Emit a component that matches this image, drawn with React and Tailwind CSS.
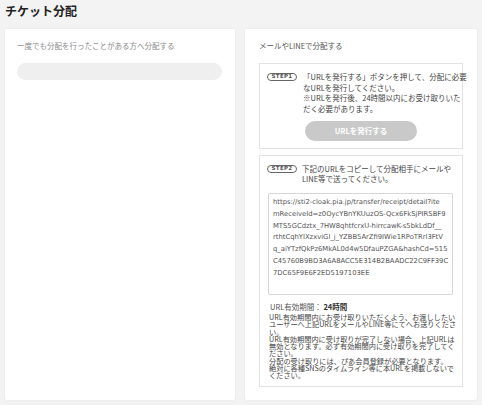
const jp = '[font-family:"Noto_Sans_CJK_JP","Noto_Sans",sans-serif]'

const urlLines = [
    'https://sti2-cloak.pia.jp/transfer/receipt/detail?ite',
    'mReceiveId=z0OycYBnYKUuzOS-Qcx6FkSjPIRSBF9',
    'MTS5GCdztx_7HW8qhtfcrxU-hirrcawK-s5bkLdDf__',
    'rthtCqhYIXzxviGl_j_YZBB5ArZfi9IWie1RPoTRrl3FtV',
    'q_aiYTzfQkPz6MkAL0d4w5DfauPZGA&hashCd=515',
    'C45760B9BD3A6A8ACC5E314B2BAADC22C9FF39C',
    '7DC65F9E6F2ED5197103EE',
]

const StepBadge = ({ n }) => (
    <span className="shrink-0 mt-[1px] flex items-center justify-center w-[30px] h-[8px] rounded-full border border-[#666] text-[5.5px] leading-none font-bold tracking-[0.3px] text-[#555] [font-family:'DejaVu_Sans',sans-serif]">
        STEP{n}
    </span>
)

export default function App() {
    return (
        <div className={`w-[482px] h-[405px] overflow-hidden bg-[#f3f3f3] px-[5px] ${jp}`}>
            <h1 className="h-[29px] pt-[3px] text-[12px] leading-[16px] font-bold text-[#222]">チケット分配</h1>
            <div className="flex gap-[10px]">
                {/* left card */}
                <div className="w-[230px] h-[371px] bg-white rounded-[2px] shadow-[0_0_2px_rgba(0,0,0,0.08)] px-[12px] pt-[12px]">
                    <p className="text-[7.5px] leading-[10px] text-[#8a8a8a]">一度でも分配を行ったことがある方へ分配する</p>
                    <div className="mt-[12px] h-[17px] w-[205px] rounded-full bg-[#efefef]"></div>
                </div>

                {/* right card */}
                <div className="w-[232px] h-[371px] bg-white rounded-[2px] shadow-[0_0_2px_rgba(0,0,0,0.08)] px-[14px] pt-[12px]">
                    <p className="text-[7.5px] leading-[10px] text-[#555]">メールやLINEで分配する</p>

                    <div className="mt-[12px] border border-[#e3e3e3] pt-[8px] pb-[7px]">
                        <div className="flex pl-[7px] gap-[6px]">
                            <StepBadge n={1} />
                            <p className="text-[7.5px] leading-[10.5px] text-[#444] whitespace-nowrap">
                                「URLを発行する」ボタンを押して、分配に必要
                                <br />
                                なURLを発行してください。
                                <br />
                                ※URLを発行後、24時間以内にお受け取りいた
                                <br />
                                だく必要があります。
                            </p>
                        </div>
                        <div className="mt-[7px] flex justify-center">
                            <button className="w-[112px] h-[20px] rounded-full bg-[#c9c9c9] text-white text-[7.5px] font-bold">
                                URLを発行する
                            </button>
                        </div>
                    </div>

                    <div className="mt-[6px] h-[232px] border border-[#e3e3e3] pt-[8px]">
                        <div className="flex pl-[7px] gap-[5px]">
                            <StepBadge n={2} />
                            <p className="text-[7.5px] leading-[10px] text-[#444] whitespace-nowrap">
                                下記のURLをコピーして分配相手にメールや
                                <br />
                                LINE等で送ってください。
                            </p>
                        </div>
                        <div className="mt-[9px] ml-[8px] w-[185px] h-[102px] border border-[#d6d6d6] rounded-[2px] pl-[4px] pt-[3px] text-[6.8px] leading-[11.8px] text-[#555] whitespace-nowrap [font-family:'DejaVu_Sans',sans-serif]">
                            {urlLines.map((l) => (
                                <div key={l}>{l}</div>
                            ))}
                        </div>
                        <p className="mt-[7px] ml-[10px] text-[7.5px] leading-[10px] text-[#555]">
                            URL有効期間： <span className="font-bold text-[#333]">24時間</span>
                        </p>
                        <div className="mt-[2px] ml-[9px] text-[7.2px] leading-[7.3px] text-[#444] whitespace-nowrap">
                            <p>
                                URL有効期間内にお受け取りいただくよう、お渡ししたい
                                <br />
                                ユーザーへ上記URLをメールやLINE等にてへお送りくださ
                                <br />
                                い。
                            </p>
                            <p>
                                URL有効期間内に受け取りが完了しない場合、上記URLは
                                <br />
                                無効となります。必ず有効期間内に受け取りを完了してく
                                <br />
                                ださい。
                            </p>
                            <p>
                                分配の受け取りには、ぴあ会員登録が必要となります。
                                <br />
                                絶対に各種SNSのタイムライン等に本URLを掲載しないで
                                <br />
                                ください。
                            </p>
                        </div>
                    </div>
                </div>
            </div>
        </div>
    )
}
